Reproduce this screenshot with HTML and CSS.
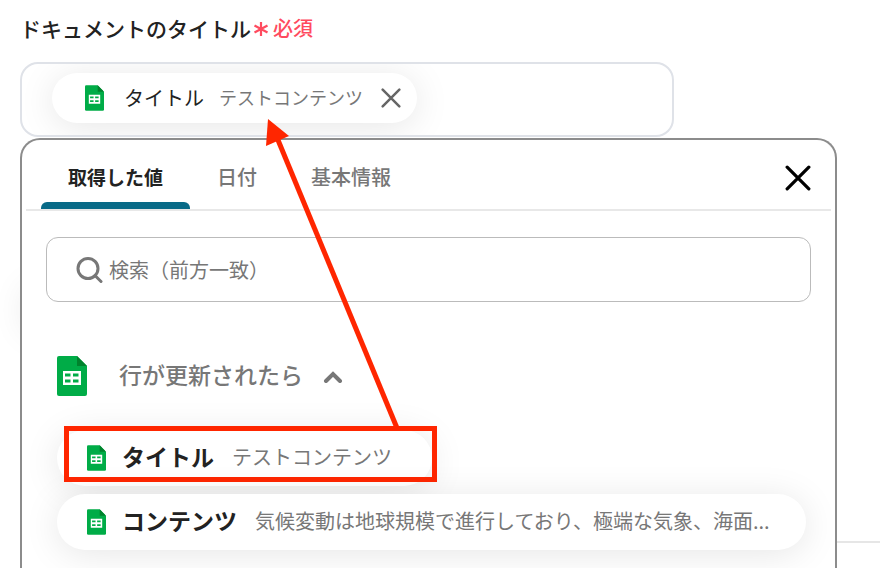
FILE: index.html
```html
<!DOCTYPE html>
<html lang="ja">
  <head>
    <meta charset="UTF-8" />
    <meta name="viewport" content="width=device-width, initial-scale=1.0" />
    <title>ドキュメントのタイトル</title>
    <link rel="stylesheet" href="styles.css">
  </head>
  <body>
    <!-- Shared icons -->
    <svg class="sprite" aria-hidden="true">
      <symbol id="sheet" viewBox="0 0 30 40">
        <path d="M2 0H20L30 10V38a2 2 0 0 1-2 2H2a2 2 0 0 1-2-2V2a2 2 0 0 1 2-2z" fill="#00ac47" />
        <path d="M20 0L30 10H20z" fill="#00832d" />
        <path d="M6 15H24V29H6zM8 17.500V20.500H13.500V17.500zM16 17.500V20.500H21.500V17.500zM8 23.500V26.500H13.500V23.500zM16 23.500V26.500H21.500V23.500z" fill="#fff" fill-rule="evenodd" />
      </symbol>
      <symbol id="cross" viewBox="0 0 24 24">
        <path d="M2 2L22 22M22 2L2 22" fill="none" stroke="currentColor" stroke-linecap="round" />
      </symbol>
    </svg>

    <main class="page">
      <div class="label-row">
        <label for="docTitle">ドキュメントのタイトル</label>
        <span class="required">
          <svg class="asterisk" viewBox="0 0 16 16"><path d="M8 2V16M1.500 5.500L14.500 12.500M14.500 5.500L1.500 12.500" stroke="currentColor" stroke-width="2.200" /></svg>
          必須
        </span>
      </div>

      <div class="field">
        <div class="chip">
          <svg class="sheet-sm"><use href="#sheet" /></svg>
          <span class="chip-name">タイトル</span>
          <span class="chip-value">テストコンテンツ</span>
          <button class="chip-remove" type="button" aria-label="削除"><svg><use href="#cross" /></svg></button>
        </div>
        <input id="docTitle" class="field-input" type="text" />
      </div>

      <!-- Value picker -->
      <section class="panel">
        <header class="panel-head">
          <nav class="tabs">
            <button class="tab active" type="button">取得した値</button>
            <button class="tab" type="button">日付</button>
            <button class="tab" type="button">基本情報</button>
          </nav>
          <button class="panel-close" type="button" aria-label="閉じる"><svg><use href="#cross" /></svg></button>
        </header>

        <div class="panel-body">
          <div class="search">
            <svg class="search-icon" viewBox="0 0 28 28"><circle cx="13" cy="12.500" r="10" /><path d="M20 19.500L26 25.500" /></svg>
            <input type="text" placeholder="検索（前方一致）" aria-label="検索" />
          </div>

          <div class="group">
            <button class="group-head" type="button">
              <svg class="sheet-lg"><use href="#sheet" /></svg>
              <span>行が更新されたら</span>
              <svg class="chevron" viewBox="0 0 20 14"><path d="M3 12L10 5L17 12" /></svg>
            </button>

            <ul class="items">
              <li>
                <button class="item short" type="button">
                  <svg class="sheet-sm"><use href="#sheet" /></svg>
                  <strong>タイトル</strong>
                  <span class="item-value">テストコンテンツ</span>
                </button>
                <span class="highlight"></span>
              </li>
              <li>
                <button class="item" type="button">
                  <svg class="sheet-sm"><use href="#sheet" /></svg>
                  <strong>コンテンツ</strong>
                  <span class="item-value">気候変動は地球規模で進行しており、極端な気象、海面...</span>
                </button>
              </li>
            </ul>
          </div>
        </div>
      </section>

      <!-- Arrow from the picked row up to the chip -->
      <svg class="arrow" viewBox="0 0 140 312" aria-hidden="true">
        <path d="M15 22L134 310" stroke="#ff2600" stroke-width="5" />
        <path d="M5 1L26 18L3 28z" fill="#ff2600" />
      </svg>
    </main>
  </body>
</html>
```
FILE: styles.css
```css
* {
  box-sizing: border-box;
}

body {
  margin: 0;
  background-color: #fff;
  color: #222;
  font-family: "Noto Sans CJK JP", sans-serif;
  font-size: 20px;
  line-height: 28px;
}

button,
input {
  font: inherit;
  color: inherit;
  background: none;
  border: 0;
  padding: 0;
}

button {
  cursor: pointer;
}

svg {
  display: block;
  flex: none;
}

.sprite {
  position: absolute;
  width: 0;
  height: 0;
}

.page {
  position: relative;
  display: flex;
  flex-direction: column;
  min-height: 100vh;
  padding: 14px 43px 0 20px;
  overflow: hidden;
}

/* rest of the form behind the picker */
.page::before {
  content: "";
  position: absolute;
  left: 28px;
  top: 290px;
  width: 100px;
  height: 40px;
  box-shadow: 0 0 36px rgba(0, 0, 0, 0.12);
}

.page::after {
  content: "";
  position: absolute;
  top: 541px;
  right: 0;
  width: 43px;
  height: 2px;
  background-color: #e6e6e6;
}

.label-row {
  display: flex;
  align-items: center;
  gap: 2px;
  margin-bottom: 20px;
  font-weight: 500;
}

.label-row label {
  font-size: 21px;
}

.required {
  display: flex;
  align-items: center;
  gap: 4px;
  color: #ff4b5f;
}

.asterisk {
  width: 16px;
  height: 16px;
}

/* Field */
.field {
  display: flex;
  align-items: center;
  width: 80%;
  height: 75px;
  padding: 0 30px;
  border: 2px solid #dfe2e8;
  border-radius: 18px;
  margin-bottom: 1px;
  overflow: hidden;
}

.field-input {
  flex: 1;
  min-width: 0;
  outline: none;
}

.chip,
.item {
  display: flex;
  align-items: center;
  background-color: #fff;
  border-radius: 28px;
  box-shadow: 0 4px 36px rgba(0, 0, 0, 0.1);
  white-space: nowrap;
}

.chip {
  height: 50px;
  padding: 0 16px 0 33px;
  margin-bottom: 4px;
}

.chip-name {
  margin: 0 15px 0 20px;
}

.chip-value {
  padding-bottom: 2px;
  font-size: 18px;
  color: #777;
}

.chip-remove {
  margin-left: 18px;
  color: #666;
}

.chip-remove svg {
  width: 20px;
  height: 20px;
  stroke-width: 3;
}

.sheet-sm {
  width: 19px;
  height: 26px;
}

.sheet-lg {
  width: 30px;
  height: 40px;
}

/* Panel */
.panel {
  position: relative;
  flex: 1;
  background-color: #fff;
  border: 2px solid #8c8c8c;
  border-bottom: 0;
  border-radius: 20px 20px 0 0;
}

.panel-head {
  display: flex;
  justify-content: space-between;
  align-items: center;
  height: 71px;
  margin: 0 4px;
  padding: 0 20px 0 15px;
  border-bottom: 2px solid #e8e8e8;
}

.tabs {
  display: flex;
  align-self: stretch;
}

.tab {
  position: relative;
  padding: 4px 27px 0;
  color: #777;
  font-weight: 500;
}

.tab.active {
  color: #222;
  font-size: 19px;
  font-weight: 700;
}

.tab.active::after {
  content: "";
  position: absolute;
  left: 0;
  right: 0;
  bottom: 0;
  height: 7px;
  border-radius: 6px 6px 0 0;
  background-color: #086a87;
}

.panel-close {
  padding-top: 6px;
  color: #000;
}

.panel-close svg {
  width: 26px;
  height: 26px;
  stroke-width: 3;
}

.panel-body {
  padding: 26px 24px 0;
}

.search {
  display: flex;
  align-items: center;
  gap: 6px;
  height: 65px;
  padding: 0 28px;
  border: 1px solid #bbb;
  border-radius: 12px;
}

.search-icon {
  width: 28px;
  height: 28px;
  fill: none;
  stroke: #777;
  stroke-width: 3;
  stroke-linecap: round;
}

.search input {
  flex: 1;
  min-width: 0;
  outline: none;
}

.search input::placeholder {
  color: #777;
  opacity: 1;
}

.group {
  padding: 54px 5px 18px 11px;
}

.group-head {
  display: flex;
  align-items: center;
  color: #777;
  font-size: 23px;
  font-weight: 500;
}

.group-head span {
  margin: 0 20px 0 32px;
  padding-bottom: 4px;
}

.chevron {
  width: 20px;
  height: 14px;
  fill: none;
  stroke: #777;
  stroke-width: 4;
  stroke-linecap: round;
}

.items {
  display: flex;
  flex-direction: column;
  gap: 8px;
  margin: 34px 0 0;
  padding: 0;
  list-style: none;
}

.items li {
  position: relative;
}

.item {
  width: 100%;
  height: 56px;
  padding: 0 30px;
}

.item.short {
  width: auto;
  padding-right: 40px;
}

.item strong {
  margin: 0 18px 0 16px;
  padding-bottom: 4px;
  font-size: 23px;
}

.item-value {
  padding-bottom: 2px;
  color: #777;
}

.highlight {
  position: absolute;
  left: 7px;
  top: -4px;
  width: 373px;
  height: 56px;
  border: 5px solid #ff2600;
}

.arrow {
  position: absolute;
  left: 263px;
  top: 118px;
  width: 140px;
  height: 312px;
  pointer-events: none;
}
```
